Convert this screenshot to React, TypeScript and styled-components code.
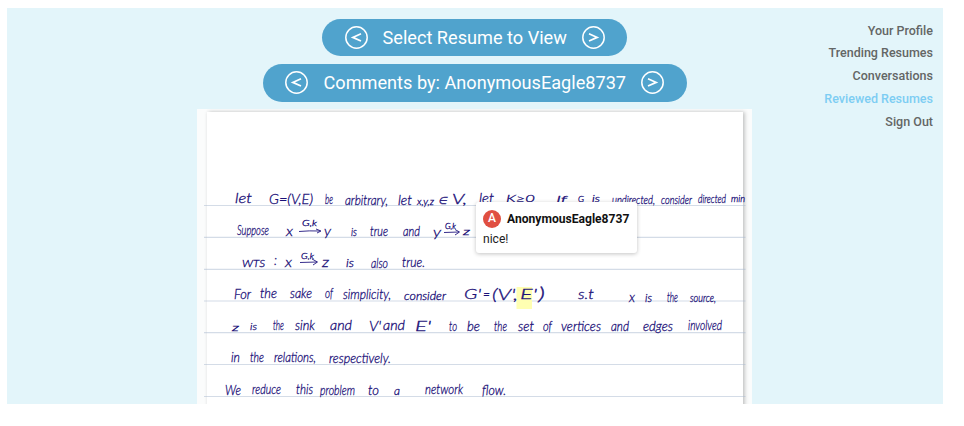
import React from "react";
import styled, { createGlobalStyle } from "styled-components";

const GlobalStyle = createGlobalStyle`
  body { margin: 0; background: #fff; font-family: Roboto, sans-serif; overflow: hidden; }
  * { box-sizing: border-box; }
`;

const Panel = styled.main`
  display: grid;
  grid-template-columns: 190px 555px 191px;
  width: 936px;
  height: 396px;
  margin: 8px 0 0 7px;
  background: #e3f5fa;
  overflow: hidden;
`;

const Viewer = styled.section`
  grid-column: 2;
  display: flex;
  flex-direction: column;
  align-items: center;
  padding-top: 10.7px;
`;

const Pill = styled.div<{ $width: number }>`
  display: flex;
  align-items: center;
  justify-content: space-between;
  flex: none;
  width: ${(p) => p.$width}px;
  height: 37.6px;
  margin-bottom: 7.8px;
  padding: 0 22.5px;
  border-radius: 19px;
  background: #50a3cd;
  color: #fff;
`;

const PillLabel = styled.span<{ $width: number }>`
  width: ${(p) => p.$width}px;
  padding-top: 1px;
  font-size: 18.15px;
  line-height: 24px;
  white-space: nowrap;
`;

const StepButton = styled.button`
  display: flex;
  width: 23px;
  height: 23px;
  padding: 0;
  border: 0;
  background: none;
  color: inherit;
`;

const Frame = styled.div`
  position: relative;
  width: 555px;
  height: 295px;
  margin-top: -0.2px;
  flex: none;
  background: #fbfcfc;
  overflow: hidden;
`;

const Sheet = styled.div`
  width: 536px;
  height: 320px;
  margin: 3px 0 0 9.5px;
  background: #fff;
  box-shadow: 2px 0 4px rgba(0, 0, 0, 0.2), 0 0 4px rgba(0, 0, 0, 0.06);
`;

const Ink = styled.svg`
  position: absolute;
  inset: 0;
  font-family: Lato, sans-serif;
  font-style: italic;
  font-weight: 300;
  fill: #1b1078;
`;

const Handwriting = styled.g`
  stroke: #1b1078;
  stroke-width: 0.3px;
`;

const Popup = styled.aside`
  position: absolute;
  left: 278.5px;
  top: 93px;
  width: 161.5px;
  height: 51px;
  padding: 7.5px 7.5px;
  border-radius: 3px;
  background: #fff;
  box-shadow: 0 1px 4px rgba(0, 0, 0, 0.24);
  color: #222;
  font-size: 12.1px;
`;

const Author = styled.div`
  display: flex;
  align-items: center;
  gap: 6px;
  height: 18px;
  color: #111;
  font-weight: 700;
  white-space: nowrap;
`;

const AuthorName = styled.span`
  padding-top: 1px;
`;

const Avatar = styled.span`
  flex: none;
  width: 18px;
  height: 18px;
  border-radius: 50%;
  background: #e04f41;
  color: #fff;
  font-size: 12px;
  font-weight: 500;
  line-height: 17px;
  text-align: center;
`;

const Remark = styled.p`
  margin: 3.5px 0 0;
  line-height: 16px;
`;

const Nav = styled.nav`
  grid-column: 3;
  display: flex;
  flex-direction: column;
  align-items: flex-end;
  padding: 11.8px 10px 0 0;
`;

const NavLink = styled.a<{ $active?: boolean }>`
  height: 22.7px;
  color: ${(p) => (p.$active ? "#7dcdf3" : "#636665")};
  font-size: 12.5px;
  font-weight: 500;
  line-height: 22.7px;
  white-space: nowrap;
`;

// text, left edge, right edge, baseline, font size
type Word = [string, number, number, number, number?];

const words: Word[] = [
  ["let", 235, 252, 203], ["G=(V,E)", 269, 313, 204], ["be", 325, 333, 204],
  ["arbitrary,", 345, 388, 205], ["let", 398, 412, 205], ["x,y,z", 417, 434, 205, 10],
  ["∈", 438, 447, 204, 10], ["V,", 452, 467, 204], ["let", 479, 494, 203],
  ["K≥0", 506, 535, 202, 10], ["If", 556, 567, 203, 10], ["G", 578, 584, 202, 8],
  ["is", 592, 600, 202, 9], ["undirected,", 612, 655, 204, 11.5], ["consider", 661, 692, 204, 11.5],
  ["directed", 698, 726, 203, 11.5], ["min", 731, 745, 202, 9],
  ["Suppose", 237, 269, 235], ["x", 286, 293, 236], ["G,k", 302, 317, 226, 8],
  ["y", 324, 331, 236], ["is", 351, 357, 236, 11], ["true", 370, 388, 236],
  ["and", 403, 420, 236], ["y", 433, 441, 237], ["G,k", 445, 456, 229, 7], ["z", 463, 470, 235, 10],
  ["WTS", 242, 265, 267, 10], [":", 274, 277, 265, 13], ["x", 285, 292, 267],
  ["G,k", 301, 314, 259, 8], ["z", 322, 329, 267], ["is", 346, 354, 267, 11],
  ["also", 371, 388, 268], ["true.", 402, 425, 267],
  ["For", 234, 251, 299], ["the", 260, 277, 298], ["sake", 290, 312, 298],
  ["of", 325, 333, 298], ["simplicity,", 343, 391, 299], ["consider", 404, 446, 300, 11],
  ["G'", 464, 481, 299, 14], ["=", 483, 490, 299], ["(V',", 492, 518, 300, 16],
  ["E'", 520, 537, 299, 14], [")", 538, 545, 300, 17], ["s.t", 578, 594, 299],
  ["x", 629, 635, 302], ["is", 645, 652, 302, 11], ["the", 667, 678, 302],
  ["source,", 690, 716, 302, 11],
  ["z", 232, 239, 331, 10], ["is", 250, 257, 330, 10], ["the", 273, 284, 330],
  ["sink", 295, 315, 330], ["and", 330, 352, 330], ["V'", 369, 381, 331, 14],
  ["and", 383, 405, 330], ["E'", 415, 431, 331], ["to", 449, 457, 331],
  ["be", 467, 480, 331], ["the", 494, 507, 331], ["set", 518, 534, 331],
  ["of", 543, 552, 331], ["vertices", 561, 601, 331], ["and", 611, 629, 331],
  ["edges", 643, 673, 331], ["involved", 688, 722, 330],
  ["in", 231, 240, 362], ["the", 250, 264, 362], ["relations,", 274, 316, 362],
  ["respectively.", 329, 391, 363],
  ["We", 225, 241, 395], ["reduce", 252, 281, 394], ["this", 296, 313, 394],
  ["problem", 320, 355, 395], ["to", 368, 379, 395], ["a", 394, 400, 395, 11],
  ["network", 425, 463, 394], ["flow.", 482, 506, 395],
];

const ruleYs = [205.5, 237.3, 269.3, 301, 332.6, 364.5, 396.5];

function Notes() {
  return (
    <Ink width="555" height="295" viewBox="197 109 555 295">
      {ruleYs.map((y) => (
        <path key={y} d={`M204 ${y}H745.5`} stroke="#a9b9d0" strokeOpacity="0.5" strokeWidth="1.2" />
      ))}
      <rect x="516.5" y="287" width="15.5" height="22" fill="#ffffb2" />
      <Handwriting>
        {words.map(([text, x1, x2, y, size = 13]) => (
          <text key={`${x1}-${y}`} x={x1} y={y} fontSize={size} textLength={x2 - x1} lengthAdjust="spacingAndGlyphs">
            {text}
          </text>
        ))}
      </Handwriting>
      <path
        d="M299 231.5Q309 230.5 320 231M316 229L321 231L317 233M444 232.5L459 232M455 229.5L459.5 232L455 235M300 262.5L317 262M312 259L317.5 262L313 265"
        fill="none"
        stroke="#211780"
        strokeWidth="0.9"
      />
    </Ink>
  );
}

function Step({ direction }: { direction: "previous" | "next" }) {
  return (
    <StepButton aria-label={direction}>
      <svg width="23" height="23" viewBox="0 0 23 23" fill="none" stroke="currentColor">
        <circle cx="11.5" cy="11.5" r="10.7" strokeWidth="1.5" />
        <path d={direction === "previous" ? "M16 7.8L7.8 11.4L16 15" : "M7 7.8L15.2 11.4L7 15"} strokeWidth="1.7" />
      </svg>
    </StepButton>
  );
}

function Selector({ width, labelWidth, label }: { width: number; labelWidth: number; label: string }) {
  return (
    <Pill $width={width}>
      <Step direction="previous" />
      <PillLabel $width={labelWidth}>{label}</PillLabel>
      <Step direction="next" />
    </Pill>
  );
}

const links = ["Your Profile", "Trending Resumes", "Conversations", "Reviewed Resumes", "Sign Out"];

export default function App() {
  return (
    <>
      <GlobalStyle />
      <Panel>
        <Viewer>
          <Selector width={305} labelWidth={184} label="Select Resume to View" />
          <Selector width={424} labelWidth={302} label="Comments by: AnonymousEagle8737" />
          <Frame>
            <Sheet />
            <Notes />
            <Popup>
              <Author>
                <Avatar>A</Avatar>
                <AuthorName>AnonymousEagle8737</AuthorName>
              </Author>
              <Remark>nice!</Remark>
            </Popup>
          </Frame>
        </Viewer>
        <Nav>
          {links.map((label) => (
            <NavLink key={label} $active={label === "Reviewed Resumes"}>{label}</NavLink>
          ))}
        </Nav>
      </Panel>
    </>
  );
}
